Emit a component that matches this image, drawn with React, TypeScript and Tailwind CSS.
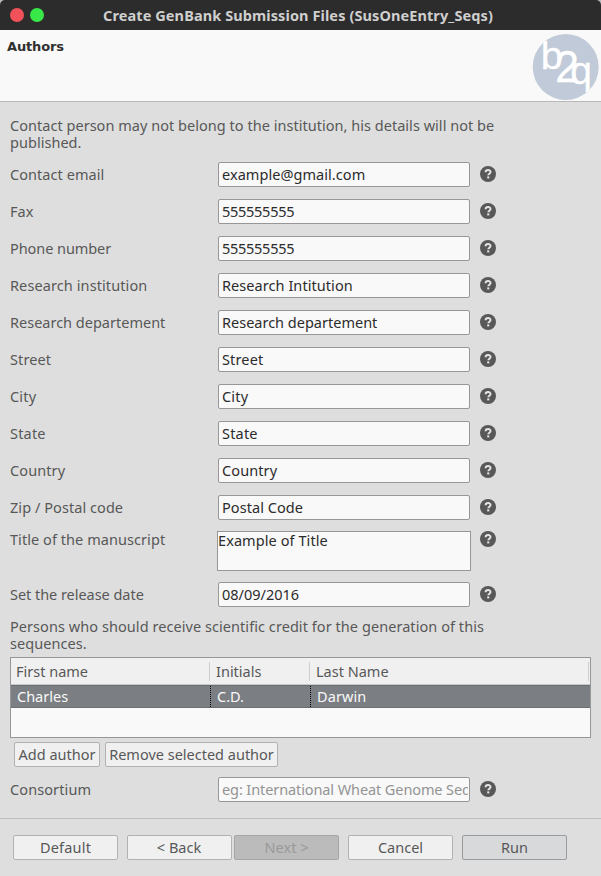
import React from "react";

const fields = [
  { label: "Contact email", value: "example@gmail.com", labelClass: "tracking-[0.06px]", inputClass: "tracking-[0.05px]" },
  { label: "Fax", value: "555555555", inputClass: "tracking-[-0.27px]" },
  { label: "Phone number", value: "555555555", labelClass: "tracking-[-0.07px]", inputClass: "tracking-[-0.27px]" },
  { label: "Research institution", value: "Research Intitution", labelClass: "tracking-[0.1px]", inputClass: "tracking-[0.06px]" },
  { label: "Research departement", value: "Research departement" },
  { label: "Street", value: "Street", labelClass: "tracking-[0.1px]", inputClass: "tracking-[0.15px]" },
  { label: "City", value: "City", labelClass: "tracking-[0.2px]", inputClass: "tracking-[0.2px]" },
  { label: "State", value: "State", labelClass: "tracking-[0.2px]", inputClass: "tracking-[0.2px]" },
  { label: "Country", value: "Country", labelClass: "tracking-[0.1px]", inputClass: "tracking-[0.1px]" },
  { label: "Zip / Postal code", value: "Postal Code", labelClass: "tracking-[0.06px]", inputClass: "tracking-[0.06px]" },
];

function Help() {
  return (
    <svg className="ml-[10px] h-4 w-4 shrink-0" viewBox="0 0 16 16">
      <circle cx="8" cy="8" r="8" fill="#585858" />
      <path d="M5.6 6.2 C5.7 3.4 10.5 3.4 10.5 6 C10.5 7.7 8.3 7.7 8.3 9.3" fill="none" stroke="#e4e4e4" strokeWidth="2" />
      <rect x="7.2" y="10.4" width="2.1" height="2" fill="#e4e4e4" />
    </svg>
  );
}

interface FieldProps {
  label: string;
  value?: string;
  placeholder?: string;
  labelClass?: string;
  inputClass?: string;
}

function Field({ label, value, placeholder, labelClass = "", inputClass = "" }: FieldProps) {
  return (
    <div className="flex h-[25px] items-center">
      <label className={`w-[208px] shrink-0 ${labelClass}`}>{label}</label>
      <input
        className={`h-[25px] w-[252px] rounded-[2px] border border-[#979797] bg-[#f9f9f9] pb-[2px] pl-[3px] pr-px text-[#2c2c2c] outline-none placeholder:text-[#949494] placeholder:opacity-100 ${inputClass}`}
        defaultValue={value}
        placeholder={placeholder}
      />
      <div className="-mt-[2px]"><Help /></div>
    </div>
  );
}

function Button({ children, className }: { children: React.ReactNode; className: string }) {
  return (
    <button className={`flex h-[25px] items-center justify-center whitespace-nowrap rounded-[2px] border ${className}`}>
      {children}
    </button>
  );
}

const normal = "border-[#b2b2b2] bg-[#f0f0f0]";

function Logo() {
  return (
    <svg className="mr-[2px] mt-1 h-[67px] w-[67px]" viewBox="532 34 67 67">
      <clipPath id="disc"><circle cx="565.7" cy="67" r="33" /></clipPath>
      <circle cx="565.7" cy="67" r="33" fill="#c1cad9" />
      <g clipPath="url(#disc)" fill="#fff" stroke="#fff" strokeWidth="0.3" fontFamily="Liberation Sans, sans-serif">
        <text x="540.8" y="69.3" fontSize="39.5">b</text>
        <text transform="translate(555.2 82) scale(0.96 1)" fontSize="44.5">2</text>
        <text x="570.2" y="84.2" fontSize="39">q</text>
      </g>
    </svg>
  );
}

export default function App() {
  return (
    <div className="h-[876px] w-[601px] overflow-hidden bg-[#dedede] font-['Noto_Sans',sans-serif] text-[14.5px] leading-[17px] text-[#585858]">
      <div className="bg-[#b9bcc0]">
        <header className="flex h-[30px] items-center rounded-t-[5px] bg-[#2c2c2c] pl-[10px]">
          <span className="h-[14px] w-[14px] rounded-full bg-[#f1525a]" />
          <span className="ml-[6px] h-[14px] w-[14px] rounded-full bg-[#38e849]" />
          <h1 className="ml-[59px] whitespace-nowrap text-[14.5px] font-bold tracking-[0.1px] text-[#cfcfcf]">Create GenBank Submission Files (SusOneEntry_Seqs)</h1>
        </header>
      </div>
      <section className="flex h-[72px] justify-between border-b border-[#b9b9b9] bg-[#f9f9f9]">
        <h2 className="ml-[7px] mt-2 font-['DejaVu_Sans',sans-serif] text-[13px] font-bold tracking-[-0.15px] text-[#303030]">Authors</h2>
        <Logo />
      </section>
      <main className="h-[716px] px-[10px] pt-[15px]">
        <p className="h-[34px] whitespace-nowrap tracking-[0.03px]">
          Contact person may not belong to the institution, his details will not be<br />published.
        </p>
        <div className="mt-[11px] flex flex-col gap-3">
          {fields.map((f) => <Field key={f.label} {...f} />)}
        </div>
        <div className="mt-[11px] flex h-10">
          <label className="w-[207px] shrink-0 tracking-[0.06px]">Title of the manuscript</label>
          <textarea className="h-10 w-[254px] resize-none border border-[#979797] bg-[#f9f9f9] tracking-[0.08px] text-[#2c2c2c] outline-none" defaultValue="Example of Title" />
          <div className="-ml-px"><Help /></div>
        </div>
        <div className="mt-[11px]"><Field label="Set the release date" value="08/09/2016" labelClass="tracking-[-0.04px]" /></div>
        <p className="mt-[11px] h-[34px] whitespace-nowrap tracking-[0.06px]">
          Persons who should receive scientific credit for the generation of this<br />sequences.
        </p>
        <div className="mt-[5px] h-[81px] w-[581px] border border-[#979797] bg-[#f9f9f9]">
          <div className="flex h-[27px] items-center border-b border-[#c8c8c8] bg-[#f0f0f0] pl-[5px]">
            <span className="w-[193px]">First name</span>
            <span className="h-[19px] w-[7px] border-l border-[#cfcfcf]" />
            <span className="w-[93px]">Initials</span>
            <span className="h-[19px] w-[7px] border-l border-[#cfcfcf]" />
            <span className="w-[272px]">Last Name</span>
            <span className="h-[19px] w-px bg-[#cfcfcf]" />
          </div>
          <div className="flex h-[23px] border-y border-[#6c6f72] bg-[#7b7e82] leading-[20px] text-[#f9f9f9]">
            <span className="w-[199px] pl-[6px]">Charles</span>
            <span className="w-[100px] border-l border-dotted border-black pl-[6px]">C.D.</span>
            <span className="border-l border-dotted border-black pl-[6px] tracking-[0.1px]">Darwin</span>
          </div>
        </div>
        <div className="ml-1 mt-1 flex gap-[5px]">
          <Button className={`w-[86px] ${normal}`}>Add author</Button>
          <Button className={`w-[173px] ${normal}`}>Remove selected author</Button>
        </div>
        <div className="mt-[10px]">
          <Field
            label="Consortium"
            placeholder="eg: International Wheat Genome Sequencing Consortium"
            labelClass="tracking-[0.1px]"
            inputClass="tracking-[-0.1px]"
          />
        </div>
      </main>
      <footer className="flex h-[58px] border-t border-[#bcbcbc] pl-[13px] pt-4">
        <Button className={`w-[105px] tracking-[0.2px] ${normal}`}>Default</Button>
        <Button className={`ml-[9px] w-[105px] pr-px ${normal}`}>&lt; Back</Button>
        <Button className="ml-[2px] w-[105px] border-[#a6a6a6] bg-[#bbb] text-[#999]">Next &gt;</Button>
        <Button className={`ml-[9px] w-[105px] ${normal}`}>Cancel</Button>
        <Button className="ml-[9px] w-[105px] border-[#999b9e] bg-[#d8d9db]">Run</Button>
      </footer>
    </div>
  );
}
